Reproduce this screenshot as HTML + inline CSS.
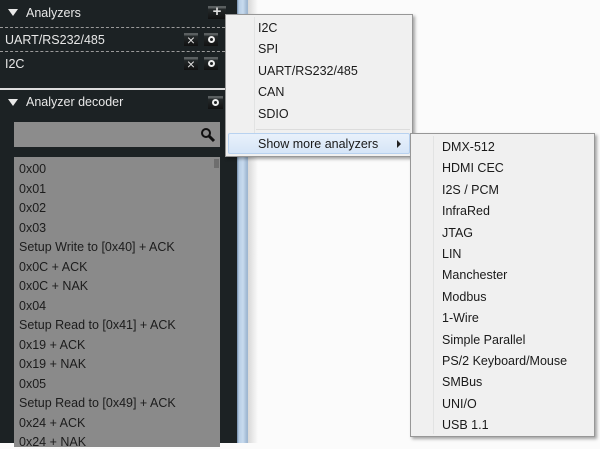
<!DOCTYPE html>
<html><head><meta charset="utf-8"><style>
*{margin:0;padding:0;box-sizing:border-box}
body{width:600px;height:443px;overflow:hidden;position:relative;background:#fbfbfb;font-family:"Liberation Sans",sans-serif;font-size:12px}
.abs{position:absolute}
#left{left:0;top:0;width:237px;height:443px;background:#1c2224}
.wt{color:#e8e8e8;font-size:12.5px;position:absolute;white-space:nowrap}
.tri{position:absolute;width:0;height:0;border-left:5px solid transparent;border-right:5px solid transparent;border-top:7px solid #e8e8e8}
.dash{position:absolute;left:0;width:225px;border-top:1px dashed #9a9a9a}
.btn{position:absolute;width:14px;height:13px;background:linear-gradient(#5a5f60 0,#5a5f60 2px,#252a2b 3px,#111 100%);color:#ddd;font-size:11px;line-height:13px;text-align:center;font-weight:bold}
.x{font-size:14px;font-weight:normal;line-height:14px}
.ring{position:absolute;left:4px;top:3px;width:7px;height:7px;border:2px solid #eee;border-radius:50%}
#list{left:14px;top:157px;width:206px;height:290px;background:#8a8a8a}
#list div{position:absolute;left:5px;color:#1c1c1c;font-size:12.5px;white-space:nowrap}
.menu{position:absolute;background:#f0f0f0;border:1px solid #979797;box-shadow:2px 2px 3px rgba(0,0,0,.35)}
.menu .col{position:absolute;top:2px;bottom:2px;border-left:1px solid #e2e3e3;}
.menu div.it{position:absolute;color:#1a1a1a;font-size:12.5px;white-space:nowrap}
</style></head><body>
<div class="abs" style="left:237px;top:0;width:11px;height:443px;background:linear-gradient(90deg,#6f8aa8 0,#b9cfe6 2px,#c7daee 6px,#9fb7d1 10px)"></div>
<div class="abs" style="left:248px;top:0;width:10px;height:443px;background:linear-gradient(90deg,#d8d8d8,#fbfbfb)"></div>
<div id="left" class="abs">
 <div class="tri" style="left:8px;top:9px"></div>
 <div class="wt" style="left:26px;top:6px">Analyzers</div>
 <div class="btn" style="left:208px;top:6px;width:18px;font-size:15px;line-height:12px">+</div>
 <div class="dash" style="top:27px"></div>
 <div class="wt" style="left:5px;top:33px">UART/RS232/485</div>
 <div class="btn x" style="left:184px;top:33px">×</div>
 <div class="btn" style="left:204px;top:33px"><div class="ring"></div></div>
 <div class="dash" style="top:51px"></div>
 <div class="wt" style="left:5px;top:57px">I2C</div>
 <div class="btn x" style="left:184px;top:57px">×</div>
 <div class="btn" style="left:204px;top:57px"><div class="ring"></div></div>
 <div class="abs" style="left:0;top:88px;width:225px;height:2px;background:#ddd"></div>
 <div class="tri" style="left:8px;top:99px"></div>
 <div class="wt" style="left:26px;top:95px">Analyzer decoder</div>
 <div class="btn" style="left:208px;top:96px;width:15px"><div class="ring"></div></div>
 <div class="abs" style="left:14px;top:122px;width:206px;height:25px;background:#8c8c8c"></div>
 <svg class="abs" style="left:200px;top:127px" width="16" height="16"><circle cx="6" cy="6" r="4" fill="none" stroke="#111" stroke-width="2"/><line x1="9" y1="9" x2="14" y2="14" stroke="#111" stroke-width="3"/></svg>
 <div id="list" class="abs">
  <div style="top:5px">0x00</div><div style="top:24.5px">0x01</div><div style="top:44px">0x02</div><div style="top:63.5px">0x03</div>
  <div style="top:83px">Setup Write to [0x40] + ACK</div><div style="top:102.5px">0x0C + ACK</div><div style="top:122px">0x0C + NAK</div>
  <div style="top:141.5px">0x04</div><div style="top:161px">Setup Read to [0x41] + ACK</div><div style="top:180.5px">0x19 + ACK</div>
  <div style="top:200px">0x19 + NAK</div><div style="top:219.5px">0x05</div><div style="top:239px">Setup Read to [0x49] + ACK</div>
  <div style="top:258.5px">0x24 + ACK</div><div style="top:278px">0x24 + NAK</div>
  <span class="abs" style="left:200px;top:2px;width:5px;height:9px;background:#6e6e6e"></span>
 </div>
</div>
<div class="menu" style="left:225px;top:14px;width:188px;height:143px">
 <div class="col" style="left:28px"></div>
 <div class="it" style="left:32px;top:6px">I2C</div>
 <div class="it" style="left:32px;top:27px">SPI</div>
 <div class="it" style="left:32px;top:49px">UART/RS232/485</div>
 <div class="it" style="left:32px;top:70px">CAN</div>
 <div class="it" style="left:32px;top:92px">SDIO</div>
 <div class="abs" style="left:30px;top:114px;width:154px;border-top:1px solid #dcdcdc"></div>
 <div class="abs" style="left:2px;top:118px;width:182px;height:21px;background:linear-gradient(#e9f1fb,#d6e5f7);border:1px solid #b8d2f0;border-radius:2px"></div>
 <div class="it" style="left:32px;top:122px">Show more analyzers</div>
 <div class="abs" style="left:171px;top:125px;width:0;height:0;border-top:4px solid transparent;border-bottom:4px solid transparent;border-left:4px solid #222"></div>
</div>
<div class="menu" style="left:410px;top:133px;width:185px;height:304px">
 <div class="col" style="left:22px"></div>
 <div class="it" style="left:31px;top:6px">DMX-512</div>
 <div class="it" style="left:31px;top:27.4px">HDMI CEC</div>
 <div class="it" style="left:31px;top:48.8px">I2S / PCM</div>
 <div class="it" style="left:31px;top:70.2px">InfraRed</div>
 <div class="it" style="left:31px;top:91.6px">JTAG</div>
 <div class="it" style="left:31px;top:113px">LIN</div>
 <div class="it" style="left:31px;top:134.4px">Manchester</div>
 <div class="it" style="left:31px;top:155.8px">Modbus</div>
 <div class="it" style="left:31px;top:177.2px">1-Wire</div>
 <div class="it" style="left:31px;top:198.6px">Simple Parallel</div>
 <div class="it" style="left:31px;top:220px">PS/2 Keyboard/Mouse</div>
 <div class="it" style="left:31px;top:241.4px">SMBus</div>
 <div class="it" style="left:31px;top:262.8px">UNI/O</div>
 <div class="it" style="left:31px;top:284.2px">USB 1.1</div>
</div>
</body></html>
